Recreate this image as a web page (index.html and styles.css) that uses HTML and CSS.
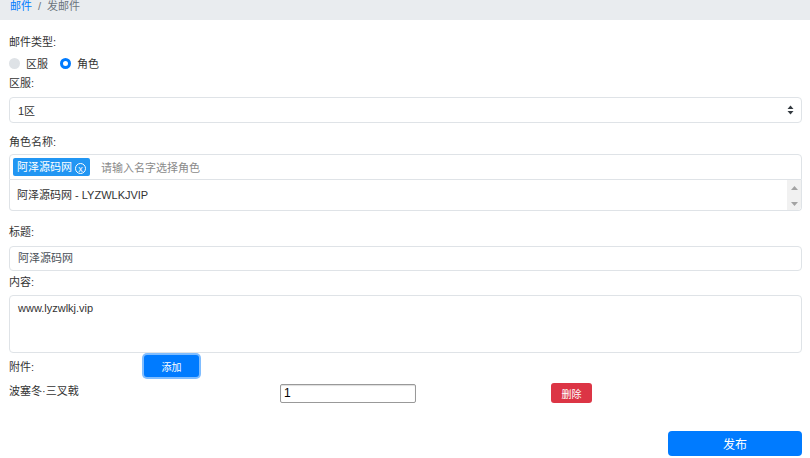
FILE: index.html
```html
<!DOCTYPE html>
<html lang="zh">
<head>
  <meta charset="UTF-8">
  <title>发邮件</title>
  <link rel="stylesheet" href="styles.css">
</head>
<body>
<div class="breadcrumb">
  <span class="crumb-link">邮件</span><span class="crumb-sep">/</span><span class="crumb-active">发邮件</span>
</div>

<form class="mail-form">
  <div class="label first">邮件类型:</div>
  <div class="radio-row">
    <label class="radio"><span class="dot off"></span>区服</label>
    <label class="radio"><span class="dot on"></span>角色</label>
  </div>

  <div class="label tight">区服:</div>
  <div class="control select">
    <span>1区</span>
    <svg width="7" height="10" viewBox="0 0 7 10"><path d="M3.5 0.5 L6.5 4 L0.5 4 Z M3.5 9.5 L6.5 6 L0.5 6 Z" fill="#343a40"/></svg>
  </div>

  <div class="label role">角色名称:</div>
  <div class="control tagbox">
    <span class="tag">阿泽源码网 <span class="tag-x">x</span></span>
    <span class="placeholder">请输入名字选择角色</span>
  </div>
  <div class="options">
    <div class="option">阿泽源码网 - LYZWLKJVIP</div>
    <div class="scrollbar">
      <svg width="7" height="4" viewBox="0 0 7 4"><path d="M3.5 0 L7 4 L0 4 Z" fill="#a3a3a3"/></svg>
      <svg width="7" height="4" viewBox="0 0 7 4"><path d="M0 0 L7 0 L3.5 4 Z" fill="#a3a3a3"/></svg>
    </div>
  </div>

  <div class="label title">标题:</div>
  <div class="control input">阿泽源码网</div>

  <div class="label content">内容:</div>
  <div class="control textarea">www.lyzwlkj.vip</div>

  <div class="attach-row">
    <span>附件:</span>
    <button type="button" class="btn btn-add">添加</button>
  </div>

  <div class="item-row">
    <div class="cell">波塞冬·三叉戟</div>
    <div class="cell"><div class="num-input">1</div></div>
    <div class="cell"><button type="button" class="btn btn-del">删除</button></div>
  </div>

  <div class="submit-row">
    <button type="submit" class="btn btn-submit">发布</button>
  </div>
</form>
</body>
</html>
```

FILE: styles.css
```css
body {
  margin: 0;
  font-family: "Liberation Sans", "Noto Sans CJK SC", sans-serif;
  font-size: 11px;
  color: #333;
  background: #fff;
}
.breadcrumb {
  background-color: #e9ecef;
  height: 20px;
  padding: 0 10px;
  line-height: 12px;
  font-size: 11px;
  overflow: hidden;
}
.crumb-link {
  color: #007bff;
}
.crumb-sep {
  color: #6c757d;
  padding: 0 6px;
}
.crumb-active {
  color: #6c757d;
}
.mail-form {
  padding: 0 8px 0 9px;
}
.label {
  line-height: 20px;
}
.label.first {
  margin-top: 12px;
}
.label.tight {
  line-height: 18px;
}
.label.role {
  margin-top: 9px;
}
.label.title {
  margin-top: 11px;
}
.label.content {
  margin-top: 1px;
}
.radio-row {
  display: flex;
  align-items: center;
  height: 22px;
  gap: 12px;
}
.radio {
  display: flex;
  align-items: center;
  gap: 6px;
}
.dot {
  width: 11px;
  height: 11px;
  border-radius: 50%;
  box-sizing: border-box;
}
.dot.off {
  background: #dee2e6;
}
.dot.on {
  background: #fff;
  border: 3.5px solid #007bff;
}
.control {
  border: 1px solid #dfe3e7;
  border-radius: 4px;
  box-sizing: border-box;
  color: #495057;
}
.select {
  margin-top: 5px;
  height: 26px;
  display: flex;
  align-items: center;
  justify-content: space-between;
  padding: 0 7px 0 8px;
  color: #333;
}
.tagbox {
  margin-top: 2px;
  height: 26px;
  display: flex;
  align-items: center;
  padding: 0 3px;
  border-radius: 4px 4px 0 0;
}
.tag {
  background: #2196f3;
  color: #fff;
  border-radius: 2px;
  height: 18px;
  line-height: 18px;
  padding: 0 4px;
}
.tag-x {
  display: inline-block;
  width: 11px;
  height: 11px;
  line-height: 10px;
  border: 1px solid #fff;
  border-radius: 50%;
  text-align: center;
  font-size: 9px;
  box-sizing: border-box;
  vertical-align: -1px;
}
.placeholder {
  color: #8a8a8a;
  margin-left: 11px;
}
.options {
  height: 31px;
  border: 1px solid #dfe3e7;
  border-top: none;
  border-radius: 0 0 4px 4px;
  box-sizing: border-box;
  display: flex;
  justify-content: space-between;
}
.option {
  line-height: 30px;
  padding-left: 7px;
  color: #333;
}
.scrollbar {
  width: 14px;
  background: #f1f1f1;
  display: flex;
  flex-direction: column;
  justify-content: space-between;
  align-items: center;
  padding: 6px 0 4px;
  box-sizing: border-box;
  border-radius: 0 0 4px 0;
}
.input {
  margin-top: 4px;
  height: 25px;
  line-height: 23px;
  padding: 0 8px;
}
.textarea {
  margin-top: 3px;
  height: 58px;
  padding: 6px 8px;
  color: #333;
}
.attach-row {
  margin-top: 2px;
  height: 22px;
  display: grid;
  grid-template-columns: 135px auto;
  align-items: center;
}
.btn {
  border: none;
  color: #fff;
  font-family: inherit;
  font-size: 10px;
  border-radius: 3px;
  padding: 0;
  cursor: pointer;
}
.btn-add {
  width: 55px;
  height: 22px;
  background: #007bff;
  box-shadow: 0 0 0 2px #80bdff;
  justify-self: start;
}
.item-row {
  margin: 6px -10px 0;
  display: grid;
  grid-template-columns: repeat(3, 1fr);
  height: 20px;
}
.cell {
  padding: 0 10px;
  display: flex;
  align-items: center;
}
.cell:first-child {
  align-items: flex-start;
  line-height: 17px;
}
.num-input {
  width: 136px;
  height: 19px;
  box-sizing: border-box;
  border: 1px solid #999;
  border-radius: 2px;
  box-shadow: inset 0 1px 1px #ddd;
  line-height: 17px;
  padding: 0 3px;
  font-size: 12px;
  color: #000;
}
.btn-del {
  width: 41px;
  height: 20px;
  background: #dc3545;
}
.submit-row {
  margin-top: 28px;
  display: flex;
  justify-content: flex-end;
}
.btn-submit {
  width: 134px;
  height: 25px;
  background: #007bff;
  font-size: 12px;
  border-radius: 4px;
}
```
